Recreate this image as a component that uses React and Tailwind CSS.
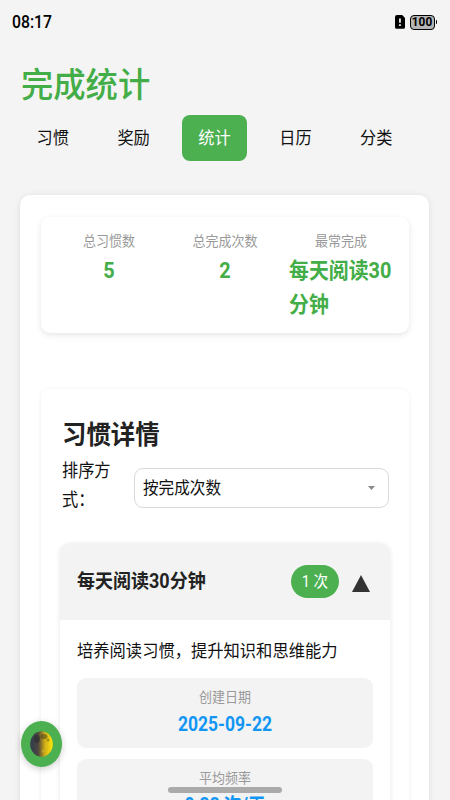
import { clsx } from 'clsx'

const tabs = ['习惯', '奖励', '统计', '日历', '分类']

const stats = [
  { label: '总习惯数', value: '5' },
  { label: '总完成次数', value: '2' },
  { label: '最常完成', value: '每天阅读30分钟' },
]

const details = [
  { label: '创建日期', value: '2025-09-22' },
  { label: '平均频率', value: '0.33 次/天' },
]

function StatusBar() {
  return (
    <div className="flex h-11 shrink-0 items-center justify-between pl-[12px] pr-[13px]">
      <span className="scale-y-[1.2] text-[15.8px] leading-5 font-medium text-black">08:17</span>
      <div className="flex items-center gap-[5px]">
        <svg width="10" height="14" viewBox="0 0 10 14">
          <path d="M2 0h5.2L10 3v9.3a1.5 1.5 0 0 1-1.5 1.5h-7A1.5 1.5 0 0 1 0 12.300V2a2 2 0 0 1 2-2z" fill="#000" />
          <path d="M4.100 3.500h1.700v4.200H4.100zM4.100 9.200h1.700v1.700H4.100z" fill="#fff" />
        </svg>
        <div className="flex items-center gap-px">
          <div className="flex h-[15px] w-[25px] items-center justify-center rounded-[4px] border border-black bg-[#b5b5b5] text-[11.800px] leading-none font-bold text-black">
            <span className="mt-[2px] scale-y-[1.15]">100</span>
          </div>
          <div className="h-1 w-[1.500px] rounded-r-sm bg-black" />
        </div>
      </div>
    </div>
  )
}

function Tabs() {
  return (
    <nav className="mt-[9px] flex px-[12.300px]">
      {tabs.map(tab => (
        <div key={tab} className="flex w-[80.900px] justify-center">
          <button
            className={clsx(
              'h-[46px] w-[65px] rounded-lg pt-px text-[16.2px] leading-6',
              tab === '统计' ? 'bg-[#4caf50] text-white' : 'text-[#111]'
            )}
          >
            <span className="inline-block scale-y-[1.08]">{tab}</span>
          </button>
        </div>
      ))}
    </nav>
  )
}

function Summary() {
  return (
    <section className="flex h-[116px] rounded-[9px] bg-white px-[10px] pt-[12px] shadow-[0_2px_6px_rgba(0,0,0,0.1)]">
      {stats.map(s => (
        <div key={s.label} className="flex flex-1 flex-col items-center">
          <span className="scale-y-[1.08] text-[13px] leading-[25px] text-[#999]">{s.label}</span>
          <div className="max-w-[104px] origin-top scale-y-[1.1] text-[19.900px] leading-[31px] font-bold text-[#43ad47]">{s.value}</div>
        </div>
      ))}
    </section>
  )
}

function SortRow() {
  return (
    <div className="flex items-start">
      <label className="mt-[5px] w-[72px] shrink-0 scale-y-[1.1] pr-5 text-[16.2px] leading-[26px] text-[#111]">排序方式：</label>
      <div className="mt-[13px] flex h-10 w-[255px] shrink-0 items-center justify-between rounded-[9px] border border-[#d9d9d9] bg-white pr-[13px] pl-[8px]">
        <span className="mt-[2px] scale-y-[1.08] text-[15.600px] leading-6 text-[#111]">按完成次数</span>
        <svg width="7" height="4" viewBox="0 0 7 4">
          <path d="M0 0h7L3.500 4z" fill="#8a8a8a" />
        </svg>
      </div>
    </div>
  )
}

function HabitCard() {
  return (
    <div className="mt-[31px] -ml-[2px] h-[400px] w-[330px] overflow-hidden rounded-[10px] bg-white shadow-[0_1px_5px_rgba(0,0,0,0.1)]">
      <div className="flex h-[77px] items-center bg-[#f3f3f3] pr-[20px] pl-[17px]">
        <h3 className="scale-y-[1.08] text-[18px] leading-7 font-bold text-[#222]">每天阅读30分钟</h3>
        <div className="ml-auto flex h-[33px] w-[48px] items-center justify-center rounded-full bg-[#4caf50] text-[14.600px] leading-6 text-white">
          <span className="mt-px scale-y-[1.08]">1 次</span>
        </div>
        <svg className="mt-[3px] ml-[13px]" width="18" height="17" viewBox="0 0 18 17">
          <path d="M9 0l9 17H0z" fill="#333" />
        </svg>
      </div>
      <div className="px-[17px] pt-[16px]">
        <p className="scale-y-[1.08] text-[16.300px] leading-8 whitespace-nowrap text-[#111]">培养阅读习惯，提升知识和思维能力</p>
        <div className="mt-[10px] flex flex-col gap-[11px]">
          {details.map(d => (
            <div key={d.label} className="flex h-[70px] flex-col items-center rounded-[9px] bg-[#f3f3f3] pt-[8px]">
              <span className="scale-y-[1.08] text-[13px] leading-6 text-[#999]">{d.label}</span>
              <span className="scale-y-[1.12] text-[17.500px] leading-7 font-bold text-[#1296f3]">{d.value}</span>
            </div>
          ))}
        </div>
      </div>
    </div>
  )
}

function MoonIcon() {
  return (
    <svg width="23" height="26" viewBox="0 0 23 26">
      <defs>
        <linearGradient id="moon" x1="0" x2="1" y1="0" y2="0">
          <stop offset="0" stopColor="#343a52" />
          <stop offset="0.35" stopColor="#4a4640" />
          <stop offset="0.5" stopColor="#8d7526" />
          <stop offset="0.65" stopColor="#cfae18" />
          <stop offset="1" stopColor="#ffe70a" />
        </linearGradient>
      </defs>
      <ellipse cx="11.500" cy="13" rx="11.300" ry="12.800" fill="url(#moon)" />
      <ellipse cx="14" cy="5.500" rx="3.500" ry="2.600" fill="#4f451c" opacity="0.55" />
      <ellipse cx="7" cy="8" rx="3" ry="4" fill="#22252b" opacity="0.5" />
      <circle cx="18" cy="9" r="1.500" fill="#8d7414" opacity="0.7" />
      <circle cx="13" cy="20" r="1.500" fill="#d6b932" opacity="0.5" />
    </svg>
  )
}

export default function App() {
  return (
    <div className="relative flex h-[800px] w-[450px] flex-col overflow-hidden bg-[#f4f4f4] font-[Roboto,'Noto_Sans_CJK_SC',sans-serif]">
      <StatusBar />
      <h1 className="mt-[18px] -mb-[2px] ml-[21px] h-[46px] scale-y-[1.06] text-[32.300px] leading-[46px] font-medium text-[#43ad47]">完成统计</h1>
      <Tabs />
      <main className="mr-[21px] ml-[20px] mt-[34px] h-[800px] shrink-0 rounded-[10px] bg-white pr-[20px] pl-[21px] pt-[22px] shadow-[0_1px_6px_rgba(0,0,0,0.1)]">
        <Summary />
        <section className="mt-[56px] h-[600px] rounded-[9px] bg-white px-[21px] pt-[26px] shadow-[0_1px_5px_rgba(0,0,0,0.07)]">
          <h2 className="scale-y-[1.08] text-[24.400px] leading-10 font-bold text-[#222]">习惯详情</h2>
          <SortRow />
          <HabitCard />
        </section>
      </main>

      {/* floating theme toggle */}
      <button className="absolute top-[721px] left-[20.500px] flex h-[46px] w-[41px] items-center justify-center rounded-[50%] bg-[#4caf50] shadow-[0_2px_7px_rgba(0,0,0,0.2)]">
        <MoonIcon />
      </button>
      <div className="absolute top-[787px] left-[168px] h-[6px] w-[114px] rounded-full bg-[#aaa]" />
    </div>
  )
}
